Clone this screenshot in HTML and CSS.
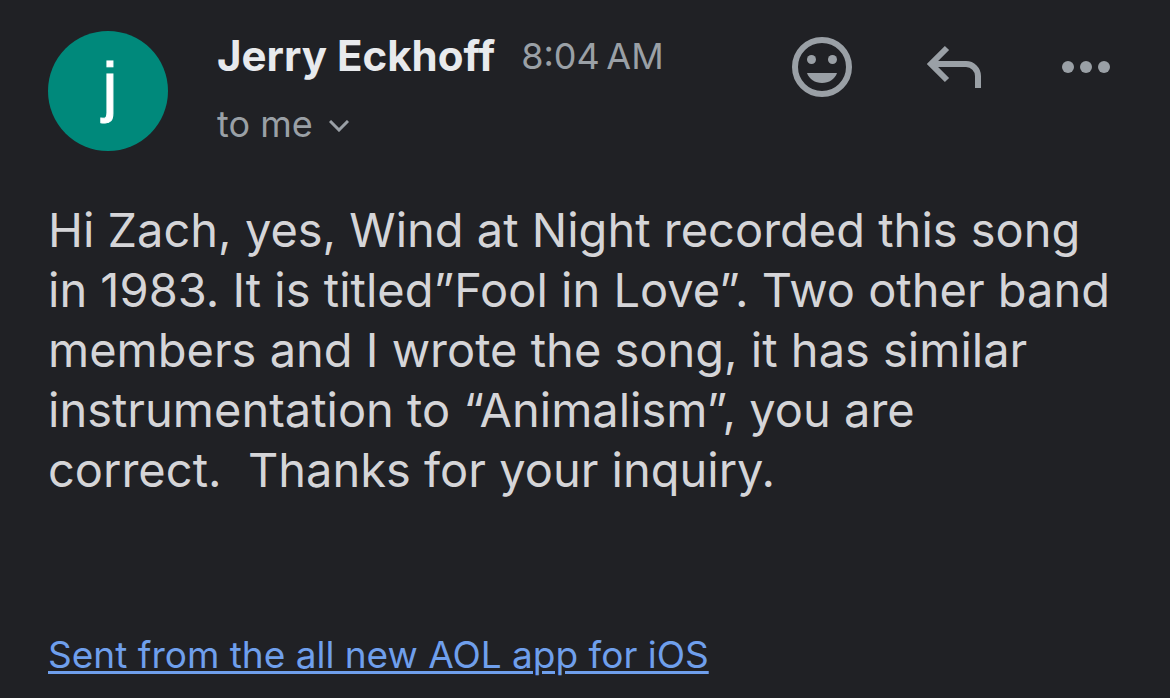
FILE: index.html
```html
<!DOCTYPE html>
<html lang="en">
<head>
<meta charset="UTF-8">
<meta name="viewport" content="width=device-width, initial-scale=1.0">
<title>Message</title>
<link rel="stylesheet" href="styles.css">
</head>
<body>

<main class="message">
  <header class="message-header">
    <div class="avatar">j</div>
    <div class="sender">
      <div class="sender-line">
        <h1 class="sender-name">Jerry Eckhoff</h1>
        <time class="sent-time">8:04&#8239;AM</time>
      </div>
      <button type="button" class="recipient">
        to me
        <svg class="chevron" width="20" height="12" viewBox="0 0 20 12" aria-hidden="true">
          <path d="M1 1l9 9 9-9" fill="none" stroke="currentColor" stroke-width="3"/>
        </svg>
      </button>
    </div>
    <!-- Message actions -->
    <div class="actions">
      <button type="button" class="icon-button" aria-label="Add reaction">
        <svg width="60" height="60" viewBox="0 0 60 60">
          <circle cx="30" cy="30" r="27" fill="none" stroke="currentColor" stroke-width="6"/>
          <circle cx="19.5" cy="22.5" r="4.5" fill="currentColor"/>
          <circle cx="40.5" cy="22.5" r="4.5" fill="currentColor"/>
          <path d="M15 36h30c-2 6-8 10-15 10s-13-4-15-10z" fill="currentColor"/>
        </svg>
      </button>
      <button type="button" class="icon-button" aria-label="Reply">
        <svg width="60" height="44" viewBox="0 0 60 44">
          <path d="M20 3L4 19l16 16M4 19h35a12 12 0 0 1 12 12v12" fill="none" stroke="currentColor" stroke-width="6"/>
        </svg>
      </button>
      <button type="button" class="icon-button" aria-label="More options">
        <svg width="48" height="12" viewBox="0 0 48 12">
          <circle cx="6" cy="6" r="6" fill="currentColor"/>
          <circle cx="24" cy="6" r="6" fill="currentColor"/>
          <circle cx="42" cy="6" r="6" fill="currentColor"/>
        </svg>
      </button>
    </div>
  </header>

  <p class="message-body">Hi Zach, yes, Wind at Night recorded this song in 1983. It is titled”Fool in Love”. Two other band members and I wrote the song, it has similar instrumentation to “Animalism”, you are correct.&nbsp;&nbsp;Thanks for your inquiry.</p>

  <a href="#" class="signature">Sent from the all new AOL app for iOS</a>
</main>

</body>
</html>
```
FILE: styles.css
```css
body {
  margin: 0;
  background-color: #202125;
  color: #d5d5d8;
  font-family: Inter, "Liberation Sans", sans-serif;
}
.message {
  padding: 31px 48px 20px;
}
.message-header {
  display: flex;
  align-items: flex-start;
}
.avatar {
  box-sizing: border-box;
  width: 120px;
  height: 120px;
  padding-left: 4px;
  border-radius: 50%;
  background-color: #00897b;
  color: #fff;
  font-family: "Liberation Sans", sans-serif;
  font-size: 67px;
  line-height: 110px;
  text-align: center;
  -webkit-text-stroke: 1px #fff;
}
.sender {
  margin-left: 49px;
}
.sender-line {
  display: flex;
  align-items: center;
  gap: 26px;
}
.sender-name {
  margin: 0;
  color: #e8eaed;
  font-size: 42px;
  font-weight: 700;
  line-height: 50px;
}
.sent-time {
  color: #9aa0a6;
  font-size: 36px;
  line-height: 50px;
}
button {
  padding: 0;
  border: none;
  background: none;
  color: #9aa0a6;
  font-family: inherit;
  cursor: pointer;
}
.recipient {
  display: flex;
  align-items: center;
  gap: 16px;
  margin-top: 21px;
  font-size: 36px;
  line-height: 44px;
}
.chevron {
  margin-top: 4px;
}
.actions {
  display: flex;
  align-items: center;
  gap: 75px;
  height: 72px;
  margin-left: auto;
  padding-right: 12px;
}
.icon-button svg {
  display: block;
}
.message-body {
  margin: 49px 0 0;
  font-size: 47px;
  line-height: 60px;
}
.signature {
  display: inline-block;
  margin-top: 131px;
  color: #6f9fec;
  font-size: 37px;
  line-height: 48px;
  text-decoration-thickness: 3px;
  text-underline-offset: 3px;
}
```
